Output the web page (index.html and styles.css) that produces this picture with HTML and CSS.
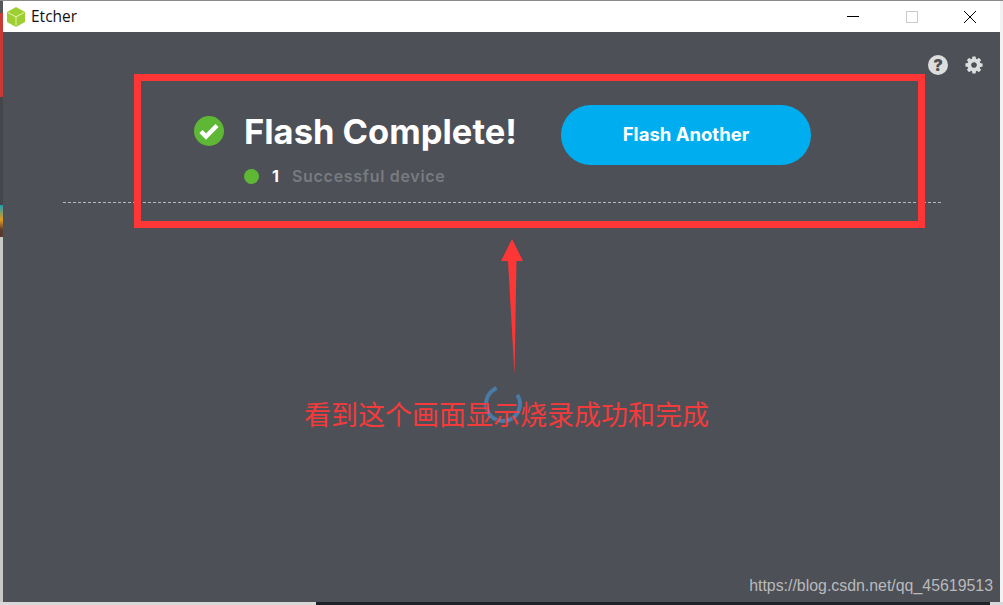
FILE: index.html
```html
<!DOCTYPE html>
<html lang="zh">
<head>
  <meta charset="UTF-8">
  <title>Etcher</title>
  <meta name="viewport" content="width=device-width, initial-scale=1.0">
  <link rel="stylesheet" href="styles.css">
</head>
<body>
  <div class="window">
    <div class="titlebar">
      <svg class="app-icon" viewBox="0 0 18 20">
        <polygon points="9,0 18,5 18,15 9,20 0,15 0,5" fill="#9ccf2f"/>
        <polyline points="1,5.500 9,10 17,5.500" fill="none" stroke="#d6ec9a" stroke-width="1.200"/>
        <line x1="9" y1="10" x2="9" y2="19" stroke="#d6ec9a" stroke-width="1.200"/>
      </svg>
      <span class="app-name">Etcher</span>
      <div class="win-controls">
        <svg class="win-btn" viewBox="0 0 12 12"><line x1="0" y1="5.500" x2="12" y2="5.500" stroke="#000"/></svg>
        <svg class="win-btn" viewBox="0 0 12 12"><rect x="0.500" y="0.500" width="11" height="11" fill="none" stroke="#ccc"/></svg>
        <svg class="win-btn" viewBox="0 0 12 12"><path d="M0 0L12 12M12 0L0 12" stroke="#000" fill="none"/></svg>
      </div>
    </div>

    <div class="main">
      <div class="top-icons">
        <div class="help-icon">?</div>
        <svg class="gear-icon" viewBox="0 0 1792 1792"><path fill="#dcdddd" fill-rule="evenodd" d="M1152 896q0-106-75-181t-181-75-181 75-75 181 75 181 181 75 181-75 75-181zm512-109v222q0 12-8 23t-20 13l-185 28q-19 54-39 91 35 50 107 138 10 12 10 25t-9 23q-27 37-99 108t-94 71q-12 0-26-9l-138-108q-44 23-91 38-16 136-29 186-7 28-36 28h-222q-14 0-24.500-8.500t-11.500-21.500l-28-184q-49-16-90-37l-141 107q-10 9-25 9-14 0-25-11-126-114-165-168-7-10-7-23 0-12 8-23 15-21 51-66.500t54-70.500q-27-50-41-99l-183-27q-13-2-21-12.500t-8-23.500v-222q0-12 8-23t19-13l186-28q14-46 39-92-40-57-107-138-10-12-10-24 0-10 9-23 26-36 98.500-107.500t94.500-71.500q13 0 26 10l138 107q44-23 91-38 16-136 29-186 7-28 36-28h222q14 0 24.500 8.500t11.500 21.500l28 184q49 16 90 37l142-107q9-9 24-9 13 0 25 10 129 119 165 170 7 8 7 22 0 12-8 23-15 21-51 66.500t-54 70.500q26 50 41 98l183 28q13 2 21 12.500t8 23.500z"/></svg>
      </div>

      <div class="results">
        <div class="summary">
          <div class="title-row">
            <svg class="check-icon" viewBox="0 0 30 30">
              <circle cx="15" cy="15" r="15" fill="#5fb835"/>
              <polyline points="7,15.500 12,20.500 23,9.500" fill="none" stroke="#fff" stroke-width="4.500"/>
            </svg>
            <h1>Flash Complete!</h1>
          </div>
          <div class="status-row">
            <span class="dot"></span>
            <span class="count">1</span>
            <span class="status-label">Successful device</span>
          </div>
        </div>
        <button class="flash-btn">Flash Another</button>
      </div>
      <div class="divider"></div>

      <svg class="spinner" viewBox="0 0 40 40">
        <circle class="spinner-arc" cx="20" cy="20" r="17" transform="rotate(-33 20 20)"/>
      </svg>
      <div class="watermark">https://blog.csdn.net/qq_45619513</div>
    </div>

    <!-- screenshot annotations, on top of the window -->
    <div class="note-box"></div>
    <svg class="note-arrow" viewBox="0 0 24 138"><polygon points="11,0 22,22 15.500,22 13.500,136 7,22 0,22" fill="#ff3636"/></svg>
    <div class="note-text">看到这个画面显示烧录成功和完成</div>
  </div>
</body>
</html>
```

FILE: styles.css
```css
* {
  margin: 0;
  padding: 0;
  box-sizing: border-box;
}
html, body {
  height: 100%;
  overflow: hidden;
}
body {
  padding: 1px 3px 3px 3px;
  background:
    linear-gradient(#8a8a8a, #8a8a8a) top / 100% 1px no-repeat,
    linear-gradient(90deg, #d8d8d8 316px, #1e2128 316px, #1e2128 990px, #d8d8d8 990px) bottom / 100% 3px no-repeat,
    linear-gradient(#55565a 13px, #c93a35 13px, #c93a35 97px, #45464b 97px, #45464b 205px, #1f9db5 205px, #e09a20 220px, #5a3a30 230px, #5a3a30 237px, #c8c8c4 237px) left / 3px 100% no-repeat,
    #f2f2f2;
}
.window {
  position: relative;
  height: 601px;
  display: flex;
  flex-direction: column;
  font-family: "Inter", sans-serif;
}
.titlebar {
  height: 31px;
  flex-shrink: 0;
  background: #fff;
  display: flex;
  align-items: center;
  padding-left: 4px;
}
.app-icon {
  width: 18px;
  height: 20px;
}
.app-name {
  margin: -2px 0 0 6px;
  font-family: "Open Sans", sans-serif;
  font-size: 15.500px;
  color: #111;
}
.win-controls {
  margin-left: auto;
  display: flex;
  gap: 46.500px;
  padding-right: 24px;
}
.win-btn {
  width: 12px;
  height: 12px;
}
.main {
  position: relative;
  flex: 1;
  background: #4d5057;
}
.top-icons {
  display: flex;
  justify-content: flex-end;
  align-items: center;
  gap: 16px;
  padding: 23px 16px 0 0;
}
.help-icon {
  width: 20px;
  height: 20px;
  border-radius: 50%;
  background: #dcdddd;
  color: #4d5057;
  font-size: 16px;
  font-weight: 900;
  line-height: 20px;
  text-align: center;
}
.gear-icon {
  width: 20px;
  height: 20px;
}
.results {
  display: flex;
  align-items: flex-start;
  margin-top: 30px;
  padding-left: 191px;
}
.summary {
  width: 367px;
  padding-top: 7px;
}
.title-row {
  display: flex;
  align-items: center;
  gap: 20px;
}
.check-icon {
  width: 30px;
  height: 30px;
  flex-shrink: 0;
  margin-top: -2px;
}
h1 {
  font-size: 34.500px;
  font-weight: 700;
  line-height: 40px;
  color: #fff;
  white-space: nowrap;
}
.status-row {
  display: flex;
  align-items: center;
  margin: 12px 0 0 50px;
  height: 24px;
}
.dot {
  width: 15px;
  height: 15px;
  border-radius: 50%;
  background: #5fb835;
}
.count {
  margin-left: 13px;
  width: 20px;
  font-size: 16px;
  font-weight: 700;
  color: #fff;
}
.status-label {
  font-size: 16px;
  font-weight: 600;
  letter-spacing: 0.700px;
  color: #787b80;
}
.flash-btn {
  width: 250px;
  height: 60px;
  padding-bottom: 2px;
  border: none;
  border-radius: 30px;
  background: #00aeef;
  color: #fff;
  font-family: "Inter", sans-serif;
  font-size: 18.500px;
  font-weight: 700;
}
.divider {
  margin: 14px 59px 0 60px;
  border-top: 1px dashed #b8b9bb;
}
.spinner {
  position: absolute;
  left: 480px;
  top: 352px;
  width: 40px;
  height: 40px;
}
.spinner-arc {
  fill: none;
  stroke: #4a7aa6;
  stroke-width: 4;
  stroke-dasharray: 83 200;
}
.watermark {
  position: absolute;
  right: 7px;
  bottom: 7px;
  font-family: "Liberation Sans", sans-serif;
  font-size: 15.900px;
  color: #b9babc;
}
.note-box {
  position: absolute;
  left: 131px;
  top: 73px;
  width: 791px;
  height: 154px;
  border: 7px solid #ff3636;
}
.note-arrow {
  position: absolute;
  left: 498px;
  top: 238px;
  width: 24px;
  height: 138px;
}
.note-text {
  position: absolute;
  left: 301px;
  top: 396px;
  font-family: "Noto Sans CJK SC", sans-serif;
  font-size: 27px;
  line-height: 34px;
  white-space: nowrap;
  color: #f33b3b;
}
```
